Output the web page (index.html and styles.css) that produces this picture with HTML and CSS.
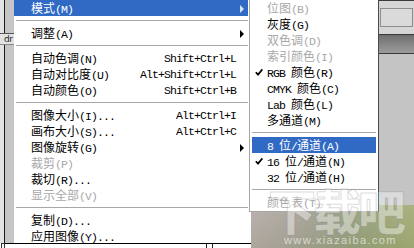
FILE: index.html
```html
<!DOCTYPE html>
<html>
<head>
<meta charset="utf-8">
<link rel="stylesheet" href="styles.css">
</head>
<body>
<div class="screen">
  <div class="left">
    <div class="left-main">
      <div class="side">
        <div class="side-seg"><span class="s-light"></span><span class="s-line"></span><span class="s-gray"></span></div>
        <div class="side-dr">dr</div>
        <div class="side-seg grow"><span class="s-light"></span><span class="s-line"></span><span class="s-gray"></span></div>
      </div>
      <div class="menu">
        <div class="item active"><span class="lbl">模式<span class="a">(M)</span></span><span class="key"></span><span class="arrow"></span></div>
        <div class="sep"></div>
        <div class="item"><span class="lbl">调整<span class="a">(A)</span></span><span class="key"></span><span class="arrow"></span></div>
        <div class="sep"></div>
        <div class="item"><span class="lbl">自动色调<span class="a">(N)</span></span><span class="key">Shift+Ctrl+L</span><span></span></div>
        <div class="item"><span class="lbl">自动对比度<span class="a">(U)</span></span><span class="key">Alt+Shift+Ctrl+L</span><span></span></div>
        <div class="item"><span class="lbl">自动颜色<span class="a">(O)</span></span><span class="key">Shift+Ctrl+B</span><span></span></div>
        <div class="sep"></div>
        <div class="item"><span class="lbl">图像大小<span class="a">(I)...</span></span><span class="key">Alt+Ctrl+I</span><span></span></div>
        <div class="item"><span class="lbl">画布大小<span class="a">(S)...</span></span><span class="key">Alt+Ctrl+C</span><span></span></div>
        <div class="item"><span class="lbl">图像旋转<span class="a">(G)</span></span><span class="key"></span><span class="arrow"></span></div>
        <div class="item dis"><span class="lbl">裁剪<span class="a">(P)</span></span><span class="key"></span><span></span></div>
        <div class="item"><span class="lbl">裁切<span class="a">(R)...</span></span><span class="key"></span><span></span></div>
        <div class="item dis"><span class="lbl">显示全部<span class="a">(V)</span></span><span class="key"></span><span></span></div>
        <div class="sep"></div>
        <div class="item"><span class="lbl">复制<span class="a">(D)...</span></span><span class="key"></span><span></span></div>
        <div class="item"><span class="lbl">应用图像<span class="a">(Y)...</span></span><span class="key"></span><span></span></div>
      </div>
    </div>
    <div class="left-bottom">
      <span class="lb-box"></span>
      <span class="lb-line"><span class="lb-mark"></span></span>
    </div>
  </div>
  <div class="right">
    <div class="right-top">
      <div class="blank"></div>
      <div class="panel">
        <div class="p-field"><div class="p-box"></div></div>
        <div class="p-band"></div>
        <div class="p-rest"></div>
      </div>
    </div>
    <div class="photo"></div>
  </div>

  <div class="submenu">
    <div class="sub-item dis">位图<span class="a">(B)</span></div>
    <div class="sub-item">灰度<span class="a">(G)</span></div>
    <div class="sub-item dis">双色调<span class="a">(D)</span></div>
    <div class="sub-item dis">索引颜色<span class="a">(I)</span></div>
    <div class="sub-item"><svg class="check" viewBox="0 0 8 8"><path d="M0.8 4.2 L3 6.6 L7.4 1.4" fill="none" stroke="#000" stroke-width="1.7"/></svg><span class="a">RGB </span>颜色<span class="a">(R)</span></div>
    <div class="sub-item"><span class="a">CMYK </span>颜色<span class="a">(C)</span></div>
    <div class="sub-item"><span class="a">Lab </span>颜色<span class="a">(L)</span></div>
    <div class="sub-item">多通道<span class="a">(M)</span></div>
    <div class="sub-sep"></div>
    <div class="sub-item active"><span class="a">8 </span>位<span class="a">/</span>通道<span class="a">(A)</span></div>
    <div class="sub-item"><svg class="check" viewBox="0 0 8 8"><path d="M0.8 4.2 L3 6.6 L7.4 1.4" fill="none" stroke="#000" stroke-width="1.7"/></svg><span class="a">16 </span>位<span class="a">/</span>通道<span class="a">(N)</span></div>
    <div class="sub-item"><span class="a">32 </span>位<span class="a">/</span>通道<span class="a">(H)</span></div>
    <div class="sub-sep"></div>
    <div class="sub-item dis">颜色表<span class="a">(T)</span></div>
  </div>

  <div class="watermark">
    <div class="wm-big">下载吧</div>
    <div class="wm-url">www.xiazaiba.com</div>
  </div>
</div>
</body>
</html>
```

FILE: styles.css
```css
* { box-sizing: border-box; margin: 0; padding: 0; }
html, body { width: 414px; height: 248px; overflow: hidden; background: #fff; }
body { font-family: "Noto Sans CJK SC", sans-serif; font-size: 12px; color: #000; }

.screen { position: relative; display: flex; width: 414px; height: 248px; }

.left { width: 251px; display: flex; flex-direction: column; }
.left-main { height: 243px; display: flex; }

.side { width: 14px; display: flex; flex-direction: column; }
.side-seg { display: flex; height: 33px; }
.side-seg.grow { flex: 1; height: auto; }
.s-light { width: 4px; background: #e4e4e4; }
.s-line { width: 1px; background: #1a1a1a; }
.s-gray { width: 9px; background: #c6c6c6; }
.side-dr {
  height: 12px; border-top: 1px solid #555; border-bottom: 1px solid #888;
  background: #e2e2e2; color: #222; overflow: hidden;
  font: 9px/10px "DejaVu Sans", sans-serif; padding-left: 4px; letter-spacing: -0.5px;
}

.menu { width: 237px; padding-right: 3px; overflow: hidden; background: #fff; }
.item {
  display: grid; grid-template-columns: 1fr auto 12px; align-items: center;
  height: 16px; line-height: 16px; padding-left: 17px; white-space: nowrap;
}
.item.active { background: #316ac5; color: #fff; }
.item.dis, .sub-item.dis { color: #a8a8a8; }
.key { font-family: "Liberation Mono", monospace; font-size: 11.5px; letter-spacing: -0.9px; }
.a { font-family: "Liberation Mono", monospace; font-size: 11.5px; letter-spacing: -0.9px; }
.arrow {
  justify-self: center; width: 0; height: 0;
  border-left: 4px solid #000; border-top: 4px solid transparent; border-bottom: 4px solid transparent;
}
.active .arrow { border-left-color: #d4e4f7; }
.sep { height: 1px; margin: 4px 0 4px 2px; background: #a8a8a8; }

.left-bottom { flex: 1; display: flex; background: #fff; }
.lb-box { width: 4px; margin-left: 1px; border: 1px solid #333; border-bottom: 0; }
.lb-line { flex: 1; border-top: 1px solid #000; padding-left: 201px; }
.lb-mark { display: block; width: 7px; height: 5px; border: 1px solid #222; border-top: 0; }

.right { width: 163px; display: flex; flex-direction: column; }
.right-top { height: 205px; display: flex; }
.blank { width: 128px; background: #fff; }
.panel { width: 35px; display: flex; flex-direction: column; }
.p-field { height: 35px; border-top: 1px solid #3a3a3a; border-bottom: 1px solid #3a3a3a; background: #d6d6d6; padding: 7px 1px 0 1px; }
.p-box { height: 19px; border: 1px solid #8e8e8e; background: #dadada; }
.p-band { height: 19px; border-bottom: 1px solid #3a3a3a; background: linear-gradient(#6f6f6f, #9c9c9c); }
.p-rest { flex: 1; background: #c4c4c4; }
.photo {
  flex: 1;
  background:
    linear-gradient(rgba(255,255,255,0.05), rgba(90,110,40,0.12)),
    linear-gradient(90deg, #b8aeac 0%, #aaa59c 28%, #98a184 60%, #9fa97a 85%, #a6ae7c 100%);
}

.submenu {
  position: absolute; left: 249px; top: 0; width: 130px; height: 212px;
  background: #fff; border: 1px solid #a6a6a6; border-top: 0; border-right-color: #4a4a4a;
  padding: 0 2px 1px;
}
.sub-item { position: relative; height: 16px; line-height: 16px; padding-left: 15px; white-space: nowrap; }
.sub-item.active { background: #316ac5; color: #fff; }
.check { position: absolute; left: 3px; top: 4px; width: 8px; height: 8px; }
.sub-sep { height: 1px; margin: 4px 0; background: #a8a8a8; }

.watermark { position: absolute; left: 268px; top: 185px; pointer-events: none; }
.wm-big {
  font-family: "Noto Sans CJK SC", sans-serif; font-weight: 900; font-size: 48px; line-height: 48px;
  color: rgba(255,255,255,0.42); letter-spacing: -3px;
  -webkit-text-stroke: 1px rgba(110,110,110,0.25);
}
.wm-url {
  margin: 1px 0 0 16px; font-family: "Liberation Sans", sans-serif; font-size: 11px; line-height: 12px;
  letter-spacing: 1.4px; color: rgba(255,255,255,0.6);
}
```
